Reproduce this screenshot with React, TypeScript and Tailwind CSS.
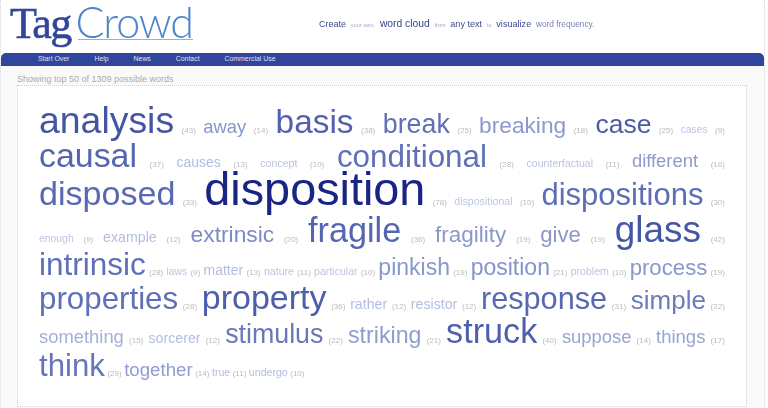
const rows: { h: string; last?: boolean; items: [string, string, string][] }[] = [
  {
    h: "h-[37px]",
    items: [
      ["analysis", "text-[37.4px] text-[#4355a5]", "(43)"],
      ["away", "text-[18.4px] text-[#8796cb]", "(14)"],
      ["basis", "text-[33.4px] text-[#5062ae]", "(38)"],
      ["break", "text-[26.8px] text-[#5f70b5]", "(25)"],
      ["breaking", "text-[22.7px] text-[#8b99cc]", "(18)"],
      ["case", "text-[26.5px] text-[#4a5ba8]", "(25)"],
      ["cases", "text-[10.3px] text-[#bcc5e4]", "(9)"],
    ],
  },
  {
    h: "h-[27px]",
    items: [
      ["causal", "text-[33.9px] text-[#5466b0]", "(37)"],
      ["causes", "text-[14px] text-[#b3bde0]", "(13)"],
      ["concept", "text-[10.6px] text-[#b9c3e4]", "(10)"],
      ["conditional", "text-[31.4px] text-[#5f70b6]", "(28)"],
      ["counterfactual", "text-[10.6px] text-[#b9c3e4]", "(11)"],
      ["different", "text-[18.4px] text-[#8e9bcd]", "(16)"],
    ],
  },
  {
    h: "h-[46px]",
    items: [
      ["disposed", "text-[34.1px] text-[#5869b2]", "(33)"],
      ["disposition", "text-[46.8px] text-[#1a2484]", "(78)"],
      ["dispositional", "text-[10.6px] text-[#bcc6e6]", "(10)"],
      ["dispositions", "text-[31px] text-[#5d6eb5]", "(30)"],
    ],
  },
  {
    h: "h-[37px]",
    items: [
      ["enough", "text-[10.4px] text-[#bcc6e6]", "(9)"],
      ["example", "text-[14.2px] text-[#b3bde0]", "(12)"],
      ["extrinsic", "text-[22.8px] text-[#7c8bc5]", "(20)"],
      ["fragile", "text-[34.2px] text-[#5566b0]", "(36)"],
      ["fragility", "text-[22.5px] text-[#8998cb]", "(19)"],
      ["give", "text-[22.2px] text-[#8998cb]", "(19)"],
      ["glass", "text-[36.9px] text-[#4456a6]", "(42)"],
    ],
  },
  {
    h: "h-[31px]",
    items: [
      ["intrinsic", "text-[31.5px] text-[#5f70b7]", "(28)"],
      ["laws", "text-[10.4px] text-[#bcc6e6]", "(9)"],
      ["matter", "text-[14px] text-[#b3bde0]", "(13)"],
      ["nature", "text-[10.6px] text-[#bcc6e6]", "(11)"],
      ["particular", "text-[10.6px] text-[#bcc6e6]", "(10)"],
      ["pinkish", "text-[23px] text-[#8998cb]", "(19)"],
      ["position", "text-[23px] text-[#8494ca]", "(21)"],
      ["problem", "text-[10.6px] text-[#bcc6e6]", "(10)"],
      ["process", "text-[22.2px] text-[#8998cb]", "(19)"],
    ],
  },
  {
    h: "h-[34px]",
    items: [
      ["properties", "text-[31.3px] text-[#5f70b7]", "(28)"],
      ["property", "text-[34px] text-[#4d5fab]", "(36)"],
      ["rather", "text-[14.2px] text-[#b3bde0]", "(12)"],
      ["resistor", "text-[14.2px] text-[#b3bde0]", "(12)"],
      ["response", "text-[30.7px] text-[#5869b2]", "(31)"],
      ["simple", "text-[26px] text-[#6b7bbb]", "(22)"],
    ],
  },
  {
    h: "h-[36px]",
    items: [
      ["something", "text-[18.4px] text-[#a3afd8]", "(15)"],
      ["sorcerer", "text-[14.2px] text-[#b3bde0]", "(12)"],
      ["stimulus", "text-[26.8px] text-[#6878ba]", "(22)"],
      ["striking", "text-[23.2px] text-[#8f9dce]", "(21)"],
      ["struck", "text-[34.2px] text-[#4e60ac]", "(40)"],
      ["suppose", "text-[18.4px] text-[#98a5d3]", "(14)"],
      ["things", "text-[18.5px] text-[#98a5d3]", "(17)"],
    ],
  },
  {
    h: "h-[35px]",
    last: true,
    items: [
      ["think", "text-[31.2px] text-[#6676ba]", "(29)"],
      ["together", "text-[18.7px] text-[#8f9dd0]", "(14)"],
      ["true", "text-[10.6px] text-[#b3bde0]", "(11)"],
      ["undergo", "text-[10.6px] text-[#b3bde0]", "(10)"],
    ],
  },
]

const nav = ["Start Over", "Help", "News", "Contact", "Commercial Use"]

export default function App() {
  return (
    <div className="h-[408px] w-[768px] overflow-hidden bg-white font-['Liberation_Sans',Arial,sans-serif]">
      <div className="h-full w-[765px] border-x border-dotted border-[#d8d8d8]">
        <header className="flex h-[53px]">
          <div className="relative ml-[9px] flex h-[53px] w-[299px] items-baseline will-change-transform">
            <span className="font-['Liberation_Serif',serif] text-[44px] leading-[44px] tracking-[-1.6px] text-[#33459b] [-webkit-text-stroke:0.6px_#33459b]">Tag</span>
            <span className="ml-[5px] font-['Lato',sans-serif] text-[43px] font-light leading-[44px] tracking-[-1.1px] text-[#4c87cc]">Crowd</span>
            <span className="absolute left-[68px] top-[39px] h-px w-[115px] bg-[#a9a6dc]" />
          </div>
          <p className="ml-[10px] flex items-baseline gap-[4.8px] pt-[18px] leading-[12px] whitespace-nowrap will-change-transform">
            <span className="text-[9px] text-[#3f4a8f]">Create</span>
            <span className="text-[5.6px] text-[#a3a8cc]">your own.</span>
            <span className="text-[10.3px] text-[#333f8a]">word cloud</span>
            <span className="text-[5.5px] text-[#a3a8cc]">from</span>
            <span className="text-[9.1px] text-[#3f4a8f]">any text</span>
            <span className="text-[5.5px] text-[#a3a8cc]">to</span>
            <span className="text-[9.1px] text-[#3f4a8f]">visualize</span>
            <span className="text-[8.3px] text-[#7c83b5]">word frequency.</span>
          </p>
        </header>
        <nav className="flex h-[13px] items-center gap-[25px] rounded-t-[5px] bg-[#32459c] pl-[37px] text-[6.9px] text-[#dfe3f2]">
          {nav.map((item) => (
            <span key={item}>{item}</span>
          ))}
        </nav>
        <main className="h-[342px] bg-[#fafafb] pl-[16px] pr-[17px] pt-[8px]">
          <p className="h-[11px] text-[9px] leading-[11px] text-[#aaaaaa]">Showing top 50 of 1309 possible words</p>
          <div className="h-[322px] border border-dotted border-[#d0d0d0] bg-white px-[21px] pt-[16px]">
            {rows.map((row) => (
              <div
                key={row.items[0][0]}
                className={`flex items-baseline whitespace-nowrap leading-none will-change-transform ${row.h} ${row.last ? "gap-[2.5px]" : "justify-between"}`}
              >
                {row.items.flatMap(([word, cls, count]) => [
                  <span key={word} className={cls}>{word}</span>,
                  <span key={word + count} className="text-[8px] text-[#bbbbbb]">{count}</span>,
                ])}
              </div>
            ))}
          </div>
        </main>
      </div>
    </div>
  )
}
